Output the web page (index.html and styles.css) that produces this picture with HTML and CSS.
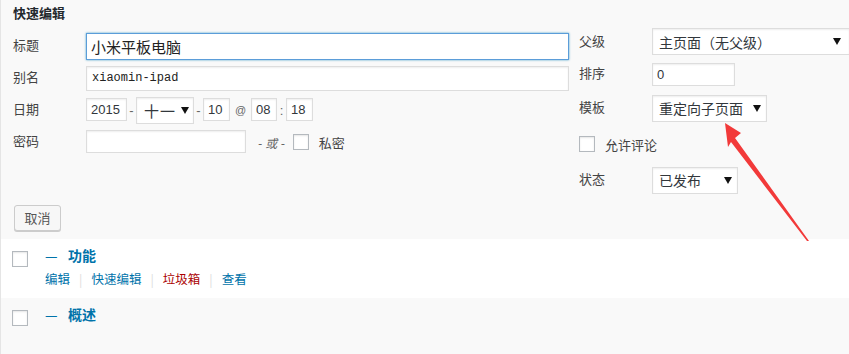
FILE: index.html
```html
<!DOCTYPE html>
<html lang="zh-CN">
  <head>
    <meta charset="UTF-8" />
    <title>快速编辑</title>
    <link rel="stylesheet" href="styles.css">
  </head>
  <body>
    <div class="page-table">
      <div class="quick-edit">
        <div class="edit-cols">
          <div class="col-left">
            <h3 class="edit-title">快速编辑</h3>
            <div class="field">
              <span class="field-label">标题</span>
              <input class="text-input title-input" type="text" value="小米平板电脑" />
            </div>
            <div class="field">
              <span class="field-label">别名</span>
              <input class="text-input slug-input" type="text" value="xiaomin-ipad" />
            </div>
            <div class="field">
              <span class="field-label">日期</span>
              <div class="date-fields">
                <input class="text-input small-input year" type="text" value="2015" />
                <span class="date-sep">-</span>
                <div class="fake-select month-select">
                  <span>十一</span><span class="caret"></span>
                </div>
                <span class="date-sep">-</span>
                <input class="text-input small-input day" type="text" value="10" />
                <span class="date-sep at">@</span>
                <input class="text-input small-input hour" type="text" value="08" />
                <span class="date-sep colon">:</span>
                <input class="text-input small-input minute" type="text" value="18" />
              </div>
            </div>
            <div class="field">
              <span class="field-label">密码</span>
              <input class="text-input password-input" type="text" value="" />
              <em class="or-text">- 或 -</em>
              <span class="check-box"></span>
              <span class="check-text">私密</span>
            </div>
          </div>
          <div class="col-right">
            <div class="field row-parent">
              <span class="field-label">父级</span>
              <div class="fake-select parent-select">
                <span>主页面（无父级）</span><span class="caret"></span>
              </div>
            </div>
            <div class="field row-order">
              <span class="field-label">排序</span>
              <input class="text-input order-input" type="text" value="0" />
            </div>
            <div class="field row-tall">
              <span class="field-label">模板</span>
              <div class="fake-select template-select">
                <span>重定向子页面</span><span class="caret"></span>
              </div>
            </div>
            <div class="field row-tall">
              <span class="check-box comment-box"></span>
              <span class="check-text">允许评论</span>
            </div>
            <div class="field row-tall">
              <span class="field-label">状态</span>
              <div class="fake-select status-select">
                <span>已发布</span><span class="caret"></span>
              </div>
            </div>
          </div>
        </div>
        <div class="edit-actions">
          <button class="cancel-button">取消</button>
        </div>
      </div>

      <div class="post-row">
        <span class="check-box row-check"></span>
        <div class="row-body">
          <a class="row-title" href="#"><span class="dash">—</span>功能</a>
          <div class="row-actions">
            <a href="#">编辑</a><span class="sep">|</span><a href="#">快速编辑</a><span class="sep">|</span><a class="trash" href="#">垃圾箱</a><span class="sep">|</span><a href="#">查看</a>
          </div>
        </div>
      </div>
      <div class="post-row alt">
        <span class="check-box row-check"></span>
        <div class="row-body">
          <a class="row-title" href="#"><span class="dash">—</span>概述</a>
        </div>
      </div>
    </div>

    <!-- red annotation arrow pointing at the template select -->
    <svg class="annotation" width="849" height="354" viewBox="0 0 849 354">
      <polygon fill="#f23a3a" points="725,123 741,133 735,138 809,241 807,241 731,142 728,147" />
    </svg>
  </body>
</html>
```

FILE: styles.css
```css
html,
body {
  margin: 0;
  height: 100%;
  overflow: hidden;
}

body {
  background: #f9f9f9;
  font-family: "Liberation Sans", "Noto Sans CJK SC", sans-serif;
  font-size: 13px;
  color: #444;
  position: relative;
}

.page-table {
  box-sizing: border-box;
  border-left: 1px solid #e5e5e5;
  min-height: 100%;
  width: 849px;
}

.quick-edit {
  background: #f9f9f9;
  padding-bottom: 8px;
}

.edit-cols {
  display: flex;
  align-items: flex-start;
}

.col-left {
  width: 556px;
  padding: 5px 0 0 12px;
}

.edit-title {
  margin: 0 0 7px 0;
  font-size: 13px;
  line-height: 18px;
  font-weight: 700;
  color: #23282d;
}

.field {
  display: flex;
  align-items: center;
  height: 32px;
}

.field-label {
  width: 73px;
  flex: none;
  line-height: 18px;
  color: #444;
}

.text-input {
  box-sizing: border-box;
  border: 1px solid #ddd;
  background: #fff;
  box-shadow: inset 0 1px 2px rgba(0, 0, 0, 0.07);
  color: #32373c;
  font-family: "Liberation Sans", "Noto Sans CJK SC", sans-serif;
  font-size: 13px;
  margin: 0;
  outline: none;
}

.title-input {
  width: 483px;
  height: 27px;
  padding: 0 4px;
  font-size: 15px;
  color: #222;
  border-color: #5b9dd9;
  box-shadow: 0 0 2px rgba(30, 140, 190, 0.8);
}

.slug-input {
  width: 483px;
  height: 25px;
  padding: 0 5px;
  font-family: "Liberation Mono", monospace;
  font-size: 12px;
  color: #222;
}

.date-fields {
  display: flex;
  align-items: center;
}

.small-input {
  height: 23px;
  padding: 0 4px;
  margin-top: -1px;
}

.year {
  width: 41px;
}

.day,
.minute {
  width: 27px;
}

.hour {
  width: 26px;
}

.date-sep {
  width: 9px;
  text-align: center;
  color: #666;
}

.date-sep.at {
  width: 21px;
  font-size: 11px;
}

.date-sep.colon {
  width: 9px;
}

.fake-select {
  box-sizing: border-box;
  display: flex;
  align-items: center;
  justify-content: space-between;
  height: 27px;
  border: 1px solid #ddd;
  background: #fff;
  box-shadow: inset 0 1px 2px rgba(0, 0, 0, 0.07);
  font-family: "Noto Sans CJK SC", sans-serif;
  font-size: 14px;
  color: #32373c;
  padding: 0 5px 0 6px;
}

.caret {
  width: 0;
  height: 0;
  border-left: 4px solid transparent;
  border-right: 4px solid transparent;
  border-top: 7px solid #111;
}

.month-select {
  width: 58px;
  padding-left: 7px;
  padding-right: 4px;
  font-size: 15px;
  letter-spacing: 1px;
}

.password-input {
  width: 160px;
  height: 23px;
  margin-top: -1px;
}

.or-text {
  margin-left: 12px;
  color: #666;
  font-size: 12px;
}

.check-box {
  box-sizing: border-box;
  display: inline-block;
  flex: none;
  width: 16px;
  height: 16px;
  border: 1px solid #b4b9be;
  background: #fff;
  box-shadow: inset 0 1px 2px rgba(0, 0, 0, 0.1);
}

.field .check-box {
  margin-left: 8px;
}

.check-text {
  margin-left: 10px;
  color: #444;
}

.col-right {
  padding: 25px 0 0 10px;
}

.row-parent {
  height: 33px;
}

.row-tall {
  height: 36px;
}

.parent-select {
  width: 197px;
  border-right: none;
  padding-right: 8px;
}

.order-input {
  width: 83px;
  height: 23px;
  padding: 0 4px;
}

.template-select {
  width: 115px;
}

.field .comment-box {
  margin-left: 0;
}

.status-select {
  width: 86px;
}

.edit-actions {
  padding: 7px 0 0 13px;
}

.cancel-button {
  box-sizing: border-box;
  width: 47px;
  height: 26px;
  border: 1px solid #ccc;
  border-radius: 3px;
  background: #f7f7f7;
  box-shadow: 0 1px 0 #ccc;
  font-family: "Noto Sans CJK SC", sans-serif;
  font-size: 13px;
  color: #555;
  padding: 0;
  line-height: 24px;
}

.post-row {
  display: flex;
  align-items: flex-start;
  height: 59px;
  background: #fff;
  padding: 6px 0 0 11px;
  box-sizing: border-box;
}

.post-row.alt {
  background: #f9f9f9;
}

.row-check {
  margin-top: 6px;
}

.row-body {
  margin-left: 17px;
}

.row-title {
  display: block;
  font-family: "Noto Sans CJK SC", sans-serif;
  font-size: 14px;
  line-height: 20px;
  font-weight: 700;
  color: #0073aa;
  text-decoration: none;
}

.dash {
  display: inline-block;
  width: 23px;
  font-weight: 400;
}

.row-actions {
  margin-top: 5px;
  font-family: "Noto Sans CJK SC", sans-serif;
  font-size: 12.5px;
  line-height: 18px;
}

.row-actions a {
  color: #0073aa;
  text-decoration: none;
}

.row-actions a.trash {
  color: #a00;
}

.row-actions .sep {
  color: #ddd;
  padding: 0 9px;
}

.annotation {
  position: absolute;
  top: 0;
  left: 0;
  pointer-events: none;
}
```
